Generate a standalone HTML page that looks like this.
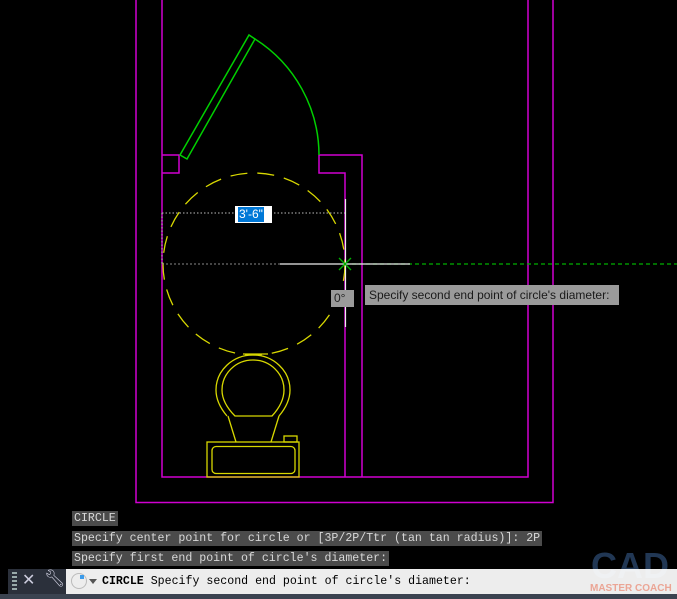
<!DOCTYPE html>
<html><head><meta charset="utf-8"><style>
html,body{margin:0;padding:0;background:#000;width:677px;height:599px;overflow:hidden;position:relative;font-family:"Liberation Mono",monospace}
.hist{position:absolute;left:72px;height:15px;background:#4b4b4b;color:#d8d8d8;font-size:11.6px;line-height:15px;padding:0 2px;white-space:pre}
</style></head><body>
<svg width="677" height="599" style="position:absolute;left:0;top:0">
<g fill="none" stroke="#d100d1" stroke-width="1.5">
<polyline points="136,0 136,502.5 553,502.5 553,0"/>
<polyline points="162,0 162,477 528,477 528,0"/>
<polyline points="162,155 179,155 179,173 162,173"/>
<polyline points="345,477 345,173 319,173 319,155 362,155 362,477"/>
</g>
<g fill="none" stroke="#00d000" stroke-width="1.5">
<polygon points="180,155 187,159 255,39 249,35"/>
<path d="M255,39 A138,138 0 0 1 319,155"/>
</g>
<circle cx="254" cy="264" r="91" fill="none" stroke="#d8d800" stroke-width="1.3" stroke-dasharray="17,10"/>
<g fill="none" stroke="#d8d800" stroke-width="1.3">
<path d="M227,416 Q216,403 216,390 A37,35 0 0 1 290,390 Q290,403 279,416"/>
<path d="M235,416 Q222,403 222,390 A31,30 0 0 1 284,390 Q284,403 272,416 Z"/>
<line x1="228" y1="416" x2="236" y2="442"/><line x1="279" y1="416" x2="271" y2="442"/>
<line x1="243" y1="354" x2="268" y2="354"/>
<rect x="207" y="442" width="92" height="35"/>
<rect x="212" y="446.5" width="83" height="27" rx="4"/>
<rect x="284" y="436" width="13" height="6"/>
</g>
<line x1="162" y1="213" x2="345" y2="213" stroke="#bbb" stroke-width="1" stroke-dasharray="1.5,2"/>
<line x1="162" y1="213" x2="162" y2="264" stroke="#bbb" stroke-width="1" stroke-dasharray="1.5,2"/>
<line x1="345" y1="264" x2="677" y2="264" stroke="#00b000" stroke-width="1.2" stroke-dasharray="4,3"/>
<line x1="162" y1="264" x2="280" y2="264" stroke="#888" stroke-width="1" stroke-dasharray="2,2"/>
<line x1="280" y1="264" x2="410" y2="264" stroke="#eee" stroke-width="1.2"/>
<line x1="345.5" y1="199" x2="345.5" y2="327" stroke="#eee" stroke-width="1.2"/>
<g stroke="#00b000" stroke-width="1.3"><line x1="339" y1="258" x2="351" y2="270"/><line x1="351" y1="258" x2="339" y2="270"/></g>
</svg>
<div style="position:absolute;left:235px;top:206px;width:37px;height:17px;background:#fff"></div>
<div style="position:absolute;left:238px;top:207px;background:#0078d7;color:#fff;font:12px 'Liberation Sans',sans-serif;line-height:15px;padding:0 1px">3'-6"</div>
<div style="position:absolute;left:331px;top:290px;width:23px;height:17px;background:#9a9a9a;color:#222;font:12px 'Liberation Sans',sans-serif;line-height:17px;text-indent:3px">0°</div>
<div style="position:absolute;left:365px;top:285px;width:254px;height:20px;background:#9a9a9a;color:#1a1a1a;font:12px 'Liberation Sans',sans-serif;line-height:20px;text-indent:4px">Specify second end point of circle's diameter:</div>
<div class="hist" style="top:511px">CIRCLE</div>
<div class="hist" style="top:531px">Specify center point for circle or [3P/2P/Ttr (tan tan radius)]: 2P</div>
<div class="hist" style="top:551px">Specify first end point of circle's diameter:</div>
<div style="position:absolute;left:586px;top:545px;width:88px;height:42px;color:#2c4a70;opacity:.75;font:bold 36px 'Liberation Sans',sans-serif;line-height:42px;text-align:center">CAD</div>
<div style="position:absolute;left:8px;top:569px;width:58px;height:25px;background:#2b303b"></div>
<div style="position:absolute;left:12px;top:572px;width:5px;height:19px;background:repeating-linear-gradient(#9aa 0 2px,transparent 2px 4px)"></div>
<div style="position:absolute;left:22px;top:570px;color:#ccd;font:16px 'Liberation Sans',sans-serif">✕</div>
<div style="position:absolute;left:44px;top:569px;color:#ccd;font:17px 'DejaVu Sans',sans-serif">🔧︎</div>
<div style="position:absolute;left:66px;top:569px;width:611px;height:25px;background:#fff;opacity:.93"></div>
<div style="position:absolute;left:71px;top:573px;width:14px;height:14px;border:1px solid #bbb;border-radius:50%"></div>
<div style="position:absolute;left:80px;top:575px;width:4px;height:4px;background:#3b9bea"></div>
<div style="position:absolute;left:89px;top:579px;border:4px solid transparent;border-top:5px solid #555"></div>
<div style="position:absolute;left:102px;top:574px;font-size:11.6px;line-height:16px;color:#000;white-space:pre"><b>CIRCLE</b> Specify second end point of circle's diameter:</div>
<div style="position:absolute;left:590px;top:583px;color:#eba595;font:bold 10px 'Liberation Sans',sans-serif">MASTER COACH</div>
<div style="position:absolute;left:0;top:594px;width:677px;height:5px;background:#3b4350"></div>
</body></html>
